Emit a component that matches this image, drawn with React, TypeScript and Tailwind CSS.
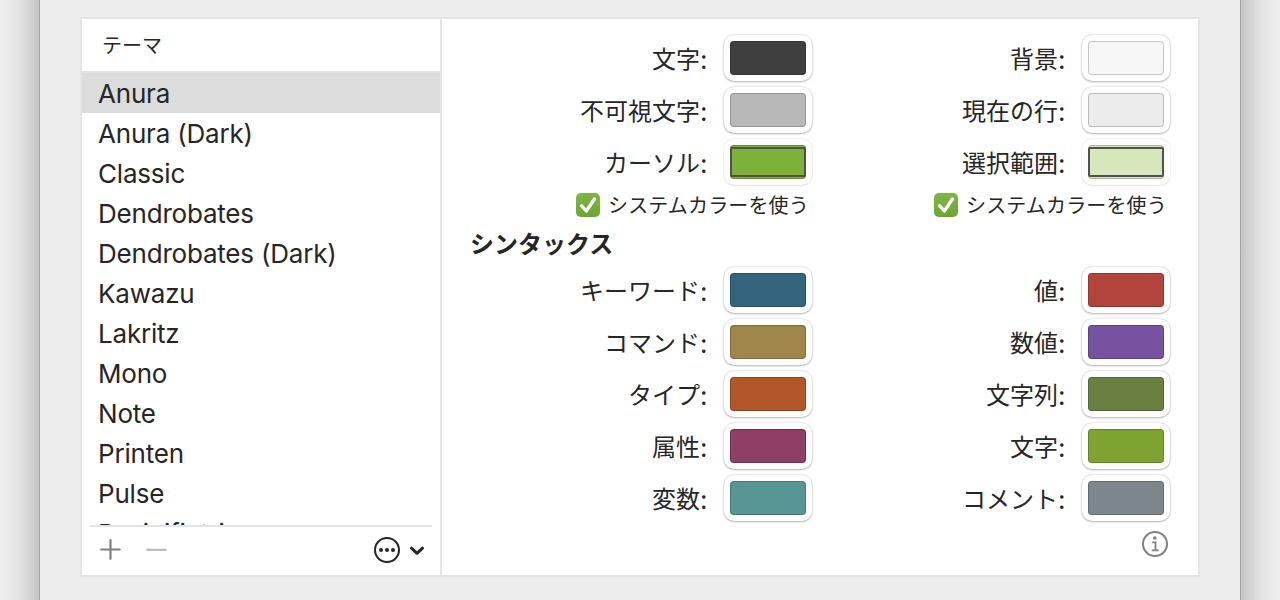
import React from 'react';

const themes = [
  'Anura', 'Anura (Dark)', 'Classic', 'Dendrobates', 'Dendrobates (Dark)', 'Kawazu',
  'Lakritz', 'Mono', 'Note', 'Printen', 'Pulse', 'Resinifictrix',
];

type Well = { label: string; color: string; system?: boolean };

const general: [Well, Well][] = [
  [{ label: '文字', color: '#3f3f3f' }, { label: '背景', color: '#f7f7f7' }],
  [{ label: '不可視文字', color: '#b8b8b8' }, { label: '現在の行', color: '#ececec' }],
  [{ label: 'カーソル', color: '#7eb13a', system: true }, { label: '選択範囲', color: '#d6e7bb', system: true }],
];

const syntax: [Well, Well][] = [
  [{ label: 'キーワード', color: '#35657c' }, { label: '値', color: '#b3443c' }],
  [{ label: 'コマンド', color: '#a0864a' }, { label: '数値', color: '#7652a0' }],
  [{ label: 'タイプ', color: '#b2572a' }, { label: '文字列', color: '#698041' }],
  [{ label: '属性', color: '#8f3e66' }, { label: '文字', color: '#7fa331' }],
  [{ label: '変数', color: '#579694' }, { label: 'コメント', color: '#7c868c' }],
];

function ColorWell({ label, color, system }: Well) {
  return (
    <div className="flex h-[46px] items-center justify-end">
      <span className="flex items-center text-[24px] leading-[46px] whitespace-nowrap">
        <span className="pt-[3px]">{label}</span>
        <span className="w-[8px] pt-[3px] text-[26px]">:</span>
      </span>
      <button
        className={
          'ml-[16px] h-[46px] w-[88px] rounded-[10px] bg-white p-[6px] ' +
          (system
            ? 'shadow-[0_0_2px_rgba(0,0,0,0.18),0_1px_1px_rgba(0,0,0,0.06)]'
            : 'shadow-[0_0_2px_rgba(0,0,0,0.26),0_1px_2px_rgba(0,0,0,0.24)]')
        }
      >
        <span
          className="block h-[34px] w-[76px] rounded-[4px] py-[2px] shadow-[inset_0_0_0_1px_rgba(0,0,0,0.2)]"
          style={{ backgroundColor: color }}
        >
          {system && <span className="block h-[30px] w-[76px] rounded-[2px] border-2 border-[#505050]" />}
        </span>
      </button>
    </div>
  );
}

function SystemCheck() {
  return (
    <label className="flex h-[24px] items-center justify-end pr-[2px] text-[20px] leading-[24px]">
      <span className="mr-[8px] flex size-[24px] items-center justify-center rounded-[5px] bg-linear-to-b from-[#80b546] to-[#6ca631] shadow-[0_0_1px_rgba(90,140,40,0.5)]">
        <svg width="24" height="24" viewBox="0 0 24 24" fill="none">
          <path d="M5.5 12.7 10.3 18 18.5 6" stroke="white" strokeWidth="3.3" strokeLinecap="round" strokeLinejoin="round" />
        </svg>
      </span>
      <span className="w-[202px] pt-[2px] tracking-[0.15px] whitespace-nowrap">システムカラーを使う</span>
    </label>
  );
}

function WellGrid({ rows }: { rows: [Well, Well][] }) {
  return (
    <div className="grid grid-cols-[340px_358px] gap-y-[6px]">
      {rows.flatMap((row, i) => row.map((w, j) => <ColorWell key={i + '-' + j} {...w} />))}
    </div>
  );
}

export default function App() {
  return (
    <div className="flex h-[600px] w-[1280px] overflow-hidden bg-[#ededed] font-['Inter','Noto_Sans_CJK_JP',sans-serif] text-[#262626]">
      <div className="w-[40px] shrink-0 border-r border-[#a4a4a4] bg-linear-to-r from-[#efefef] via-[#e4e4e4] to-[#c5c5c5]" />
      <main className="flex w-[1200px] shrink-0 flex-col items-center pt-[17px]">
        <div className="flex h-[560px] w-[1120px] shrink-0 border-2 border-[#e4e4e4] bg-white">
          <aside className="flex w-[360px] shrink-0 flex-col border-r-2 border-[#e4e4e4]">
            <header className="h-[54px] shrink-0 border-b-2 border-[#e4e4e4] pl-[20px] text-[20px] leading-[55px]">テーマ</header>
            <ul className="h-[452px] shrink-0 overflow-hidden">
              {themes.map((t, i) => (
                <li
                  key={t}
                  className={
                    'h-[40px] pl-[16px] text-[26px] leading-[42px] tracking-[-0.2px] ' +
                    (i === 0 ? 'bg-[#dcdcdc]' : '')
                  }
                >
                  {t}
                </li>
              ))}
            </ul>
            <footer className="mx-[8px] flex h-[50px] items-center border-t-2 border-[#e4e4e4] pb-[2px]">
              <svg className="ml-[10px]" width="68" height="22" viewBox="0 0 68 22" fill="none" strokeLinecap="round" strokeWidth="2.2">
                <path d="M1.2 10.5H19.8M10.5 1.2V19.8" stroke="#808080" />
                <path d="M47.2 10.8H65.8" stroke="#bdbdbd" />
              </svg>
              <svg className="ml-auto mr-[7px]" width="52" height="28" viewBox="0 0 52 28" fill="none">
                <circle cx="14" cy="14" r="12" stroke="#262626" strokeWidth="2" />
                <circle cx="8" cy="14" r="2" fill="#262626" />
                <circle cx="14" cy="14" r="2" fill="#262626" />
                <circle cx="20" cy="14" r="2" fill="#262626" />
                <path d="M38.5 12.2 44 17.3 49.5 12.2" stroke="#262626" strokeWidth="3" strokeLinecap="round" strokeLinejoin="round" />
              </svg>
            </footer>
          </aside>
          <section className="flex grow flex-col pl-[30px] pt-[16px]">
            <WellGrid rows={general} />
            <div className="mt-[8px] grid grid-cols-[340px_358px]">
              <SystemCheck />
              <SystemCheck />
            </div>
            <h2 className="mt-[9px] -ml-[2px] h-[41px] text-[24px] leading-[38px] font-bold">シンタックス</h2>
            <WellGrid rows={syntax} />
            <div className="mt-[9px] flex w-[698px] justify-end">
              <svg className="mr-[1px]" width="28" height="28" viewBox="0 0 28 28" fill="none" stroke="#808080" strokeWidth="2">
                <circle cx="14" cy="14" r="12" />
                <circle cx="13.8" cy="8" r="1.8" fill="#808080" stroke="none" />
                <path d="M11.2 12.3h3.3v8M10.8 20.3h7" strokeWidth="1.8" />
              </svg>
            </div>
          </section>
        </div>
      </main>
      <div className="w-[40px] shrink-0 border-l border-[#a4a4a4] bg-linear-to-l from-[#efefef] via-[#e4e4e4] to-[#c5c5c5]" />
    </div>
  );
}
